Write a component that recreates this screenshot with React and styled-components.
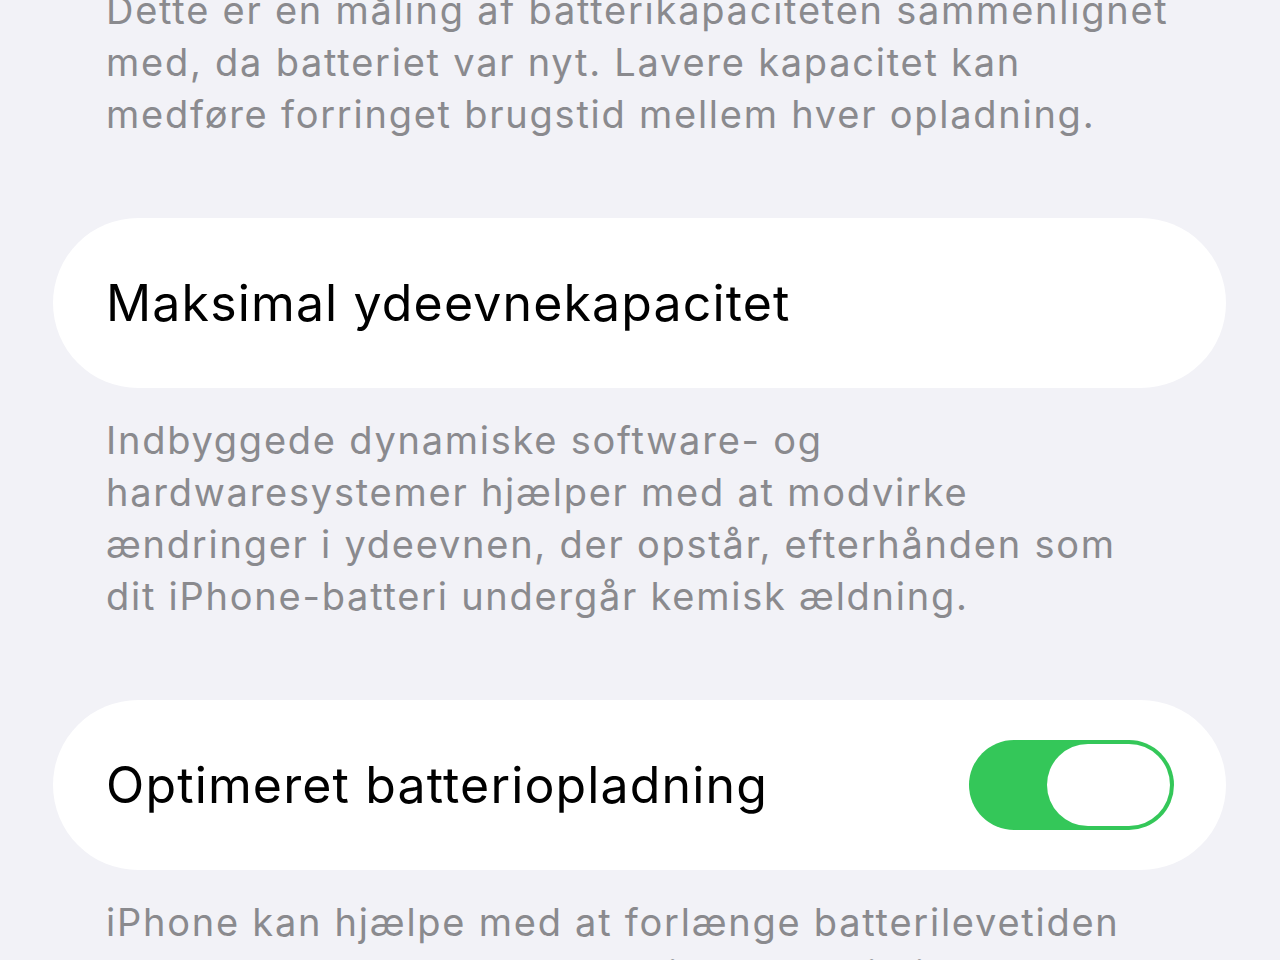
import React, { useState } from "react";
import styled, { createGlobalStyle } from "styled-components";

const GlobalStyle = createGlobalStyle`
  html, body {
    margin: 0;
    padding: 0;
    background: #f2f2f7;
    overflow: hidden;
  }
  body {
    font-family: Inter, "Noto Sans", "Liberation Sans", sans-serif;
    -webkit-font-smoothing: antialiased;
  }
`

const Page = styled.div`
  width: 1280px;
  height: 960px;
  overflow: hidden;
  background: #f2f2f7;
`

const Content = styled.div`
  display: flex;
  flex-direction: column;
  padding: 0 54px 0 53px;
  margin-top: -16px;
`

const Footnote = styled.p`
  margin: ${p => p.first ? "0" : "26px"} 0 78px;
  padding-left: 53px;
  font-size: 38px;
  line-height: 52px;
  color: #8a8a8e;
  letter-spacing: 1.75px;
  white-space: nowrap;
`

const Card = styled.div`
  display: flex;
  align-items: center;
  justify-content: space-between;
  height: 170px;
  padding: 0 52px 0 53px;
  background: #ffffff;
  border-radius: 85px;
`

const Label = styled.span`
  font-size: 50px;
  color: #000;
  letter-spacing: 1.15px;
`

const Track = styled.button`
  display: flex;
  justify-content: ${p => p.on ? "flex-end" : "flex-start"};
  align-items: center;
  width: 205px;
  height: 90px;
  padding: 4px;
  border: none;
  border-radius: 45px;
  background: ${p => p.on ? "#34c759" : "#e9e9ea"};
  cursor: pointer;
`

const Thumb = styled.span`
  display: block;
  width: 123px;
  height: 82px;
  border-radius: 41px;
  background: #ffffff;
`

const Toggle = () => {
  const [on, setOn] = useState(true)
  return (
    <Track on={on ? 1 : 0} onClick={() => setOn(!on)}>
      <Thumb />
    </Track>
  )
}

export default function App() {
  return (
    <Page>
      <GlobalStyle />
      <Content>
        <Footnote first>
          Dette er en måling af batterikapaciteten sammenlignet<br />
          med, da batteriet var nyt. Lavere kapacitet kan<br />
          medføre forringet brugstid mellem hver opladning.
        </Footnote>
        <Card>
          <Label>Maksimal ydeevnekapacitet</Label>
        </Card>
        <Footnote>
          Indbyggede dynamiske software- og<br />
          hardwaresystemer hjælper med at modvirke<br />
          ændringer i ydeevnen, der opstår, efterhånden som<br />
          dit iPhone-batteri undergår kemisk ældning.
        </Footnote>
        <Card>
          <Label>Optimeret batteriopladning</Label>
          <Toggle />
        </Card>
        <Footnote>
          iPhone kan hjælpe med at forlænge batterilevetiden<br />
          ved at lære, hvordan du dagligt lader din iPhone op
        </Footnote>
      </Content>
    </Page>
  )
}
